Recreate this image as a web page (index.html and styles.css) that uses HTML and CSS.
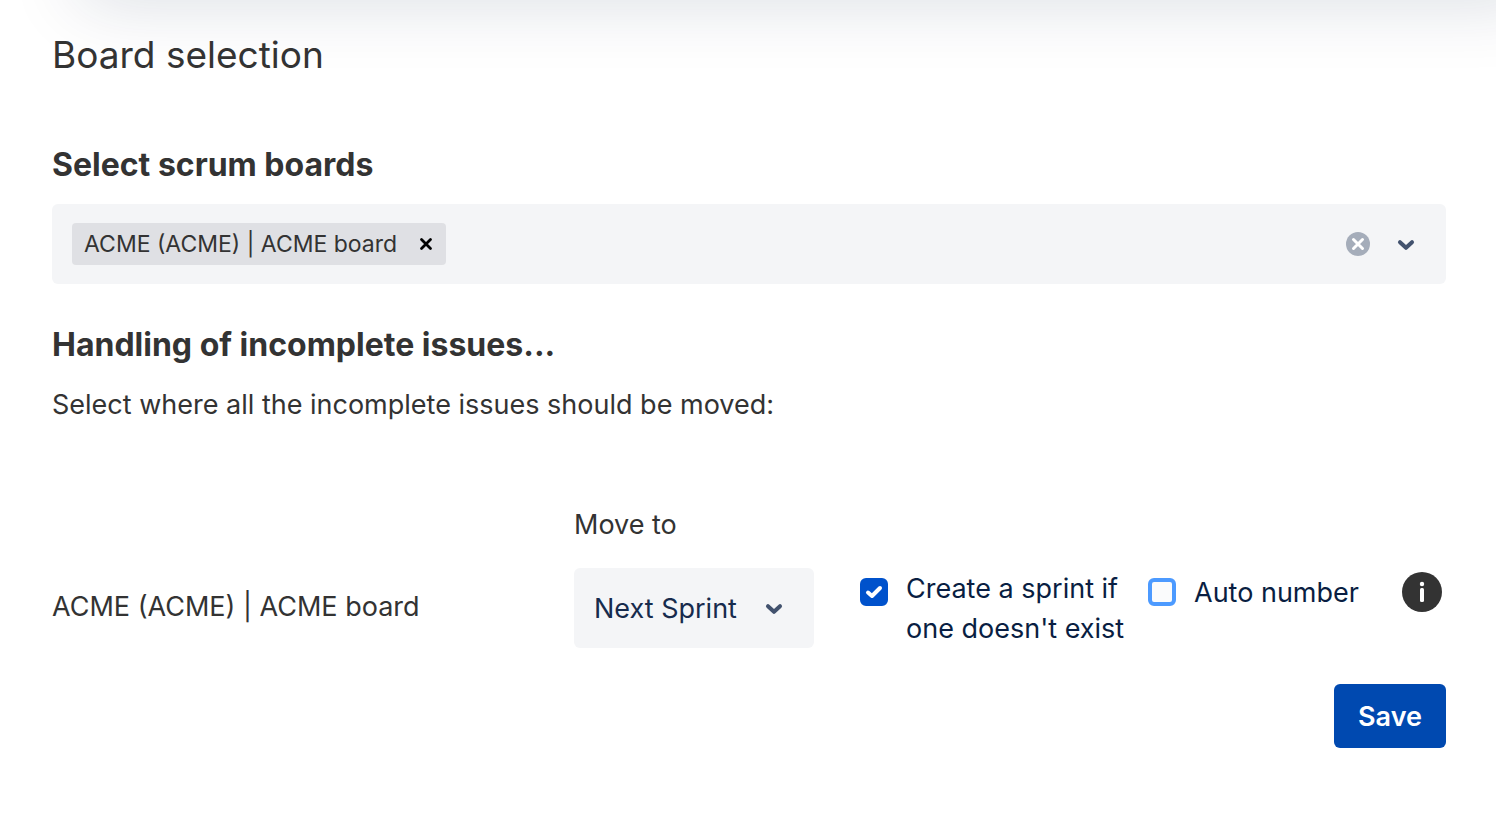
FILE: index.html
```
<!DOCTYPE html>
<html lang="en">
<head>
    <meta charset="UTF-8">
    <title>Board selection</title>
    <link rel="stylesheet" href="styles.css">
</head>
<body>
<div class="top-shadow"></div>
<form class="page">
    <h1>Board selection</h1>

    <h2><label for="boards">Select scrum boards</label></h2>
    <div class="multi-select">
        <span class="tag">
            ACME (ACME) | ACME board
            <button type="button" class="tag-remove" aria-label="Remove ACME board">
                <svg width="14" height="14" viewBox="0 0 14 14"><path d="M2.5 2.5l9 9M11.5 2.5l-9 9" stroke="#000" stroke-width="2.8" stroke-linecap="round"/></svg>
            </button>
        </span>
        <input type="text" id="boards" class="multi-input">
        <button type="button" class="icon-btn" aria-label="Clear">
            <svg width="24" height="24" viewBox="0 0 24 24"><circle cx="12" cy="12" r="12" fill="#a5adba"/><path d="M7.5 7.5l9 9M16.5 7.5l-9 9" stroke="#fff" stroke-width="3" stroke-linecap="round"/></svg>
        </button>
        <button type="button" class="icon-btn" aria-label="Open">
            <svg class="chevron" width="24" height="24" viewBox="0 0 24 24"><path d="M6 10.2l6 5.6 6-5.6"/></svg>
        </button>
    </div>

    <h2>Handling of incomplete issues...</h2>
    <p class="hint">Select where all the incomplete issues should be moved:</p>

    <div class="rules">
        <label class="move-label" for="move-to">Move to</label>
        <span class="board-name">ACME (ACME) | ACME board</span>
        <div class="select">
            <select id="move-to">
                <option>Next Sprint</option>
                <option>Backlog</option>
            </select>
            <svg class="chevron" width="24" height="24" viewBox="0 0 24 24"><path d="M6 10.2l6 5.6 6-5.6"/></svg>
        </div>
        <label class="check check-create">
            <span class="box">
                <input type="checkbox" checked>
                <svg width="28" height="28" viewBox="0 0 28 28"><path d="M8 14.5l4 3.5 8-8"/></svg>
            </span>
            <span>Create a sprint if one doesn't exist</span>
        </label>
        <label class="check check-auto">
            <span class="box">
                <input type="checkbox">
                <svg width="28" height="28" viewBox="0 0 28 28"><path d="M8 14.5l4 3.5 8-8"/></svg>
            </span>
            <span>Auto number</span>
        </label>
        <button type="button" class="info" aria-label="About auto number">
            <svg width="40" height="40" viewBox="0 0 40 40"><circle cx="20" cy="20" r="20" fill="#333"/><circle cx="20" cy="12" r="2.2" fill="#fff"/><rect x="18" y="16" width="4" height="14" rx="1.5" fill="#fff"/></svg>
        </button>
    </div>

    <div class="actions">
        <button type="submit" class="save">Save</button>
    </div>
</form>
</body>
</html>
```
FILE: styles.css
```
*{
    box-sizing: border-box;
    margin: 0;
    padding: 0;
}
body{
    background: #fff;
    color: #333;
    font: 27px/40px Inter, "Liberation Sans", sans-serif;
    overflow-x: hidden;
}
button{
    border: 0;
    background: none;
    font: inherit;
    cursor: pointer;
}
svg{
    display: block;
    fill: none;
}
/* shadow of the header above the page */
.top-shadow{
    position: absolute;
    top: -80px;
    left: 84px;
    right: -40px;
    height: 60px;
    box-shadow: 0 16px 72px 4px rgba(9,30,66,.16);
    pointer-events: none;
}
.page{
    position: relative;
    padding: 31px 50px 40px 52px;
}
h1{
    font-size: 37px;
    font-weight: 400;
    line-height: 48px;
    margin-bottom: 66px;
}
h2{
    font-size: 32px;
    font-weight: 700;
    line-height: 40px;
}
.multi-select{
    display: flex;
    align-items: center;
    min-height: 80px;
    margin: 19px 0 41px;
    padding: 0 28px 0 20px;
    background: #f4f5f7;
    border-radius: 6px;
}
.tag{
    display: flex;
    align-items: center;
    height: 42px;
    padding-left: 12px;
    background: #dfe0e4;
    border-radius: 4px;
    font-size: 23px;
    white-space: nowrap;
}
.tag-remove{
    padding: 12px 13px 12px 22px;
}
.multi-input{
    flex: 1;
    min-width: 0;
    border: 0;
    outline: 0;
    background: none;
    font: inherit;
}
.icon-btn{
    margin-left: 24px;
}
.chevron{
    stroke: #42526e;
    stroke-width: 4;
    stroke-linecap: round;
    stroke-linejoin: round;
}
.hint{
    margin: 20px 0 80px;
}
.rules{
    display: grid;
    grid-template-columns: 1fr 240px 334px 254px 44px;
    row-gap: 23px;
}
.move-label{
    grid-column: 2 / -1;
}
.board-name{
    padding-top: 19px;
}
.select{
    position: relative;
}
.select select{
    display: block;
    width: 100%;
    height: 80px;
    padding: 2px 20px 0;
    border: 0;
    border-radius: 6px;
    background: #f4f5f7;
    color: #172b4d;
    font: inherit;
    appearance: none;
}
.select .chevron{
    position: absolute;
    top: 28px;
    right: 28px;
    pointer-events: none;
}
.check{
    display: flex;
    align-items: flex-start;
    gap: 18px;
    color: #091e42;
}
.check-create{
    padding: 1px 16px 0 46px;
}
.check-auto{
    padding-top: 5px;
}
.box{
    display: grid;
    flex: none;
    margin-top: 9px;
}
.check-auto .box{
    margin-top: 5px;
}
.box input,
.box svg{
    grid-area: 1 / 1;
}
.box input{
    width: 28px;
    height: 28px;
    border: 4px solid #4c9aff;
    border-radius: 6px;
    background: #fafbfc;
    appearance: none;
}
.box input:checked{
    border-color: #0052cc;
    background: #0052cc;
}
.box svg{
    visibility: hidden;
    stroke: #fff;
    stroke-width: 4;
    stroke-linecap: round;
    stroke-linejoin: round;
    pointer-events: none;
}
.box input:checked + svg{
    visibility: visible;
}
.info{
    align-self: start;
    margin-top: 4px;
}
.actions{
    display: flex;
    justify-content: flex-end;
    margin-top: 35px;
}
.save{
    height: 64px;
    padding: 2px 24px 0;
    border-radius: 6px;
    background: #0049b0;
    color: #fff;
    font-weight: 600;
}
```
